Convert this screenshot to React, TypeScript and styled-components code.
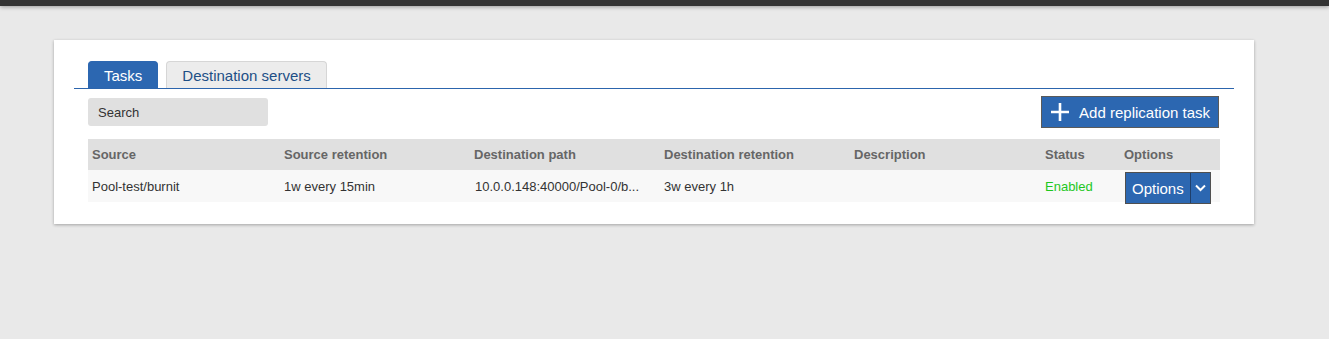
import React from "react";
import styled, { createGlobalStyle } from "styled-components";

const GlobalStyle = createGlobalStyle`
    html, body {
        margin: 0;
        padding: 0;
        background: #e9e9e9;
        font-family: "Liberation Sans", Arial, sans-serif;
    }
`;

const StyledPage = styled.div`
    min-height: 339px;
    display: flex;
    flex-direction: column;
`;

const TopBar = styled.div`
    height: 6px;
    background: #333333;
    box-shadow: 0 1px 4px rgba(0, 0, 0, 0.35);
`;

const Card = styled.div`
    margin: 34px 0 0 54px;
    width: 1200px;
    box-sizing: border-box;
    background: #ffffff;
    box-shadow: 0 1px 3px rgba(0, 0, 0, 0.3);
    padding: 21px 20px 22px 20px;
`;

const TabBar = styled.div`
    display: flex;
    gap: 8px;
    padding-left: 14px;
    border-bottom: 1px solid #2c65ad;
`;

const Tab = styled.div<{ $active?: boolean }>`
    height: 27px;
    box-sizing: border-box;
    padding: 0 15px;
    display: flex;
    align-items: center;
    font-size: 15px;
    border-radius: 4px 4px 0 0;
    background: ${(p) => (p.$active ? "#2c67b1" : "#ececec")};
    color: ${(p) => (p.$active ? "#ffffff" : "#1d4f86")};
    border: 1px solid ${(p) => (p.$active ? "#2c67b1" : "#d6d6d6")};
    border-bottom: none;
`;

const Body = styled.div`
    padding: 0 14px;
`;

const Toolbar = styled.div`
    display: flex;
    justify-content: space-between;
    align-items: flex-start;
    margin-top: 9px;
`;

const Search = styled.input`
    width: 180px;
    height: 28px;
    box-sizing: border-box;
    border: none;
    border-radius: 3px;
    background: #e0e0e0;
    padding: 0 10px;
    font-family: inherit;
    font-size: 13px;
    color: #333;
    outline: none;
    &::placeholder {
        color: #333;
    }
`;

const PrimaryButton = styled.button`
    height: 32px;
    margin-top: -2px;
    margin-right: 1px;
    box-sizing: border-box;
    display: flex;
    align-items: center;
    gap: 9px;
    padding: 0 8px 0 8px;
    background: #2c67b1;
    color: #ffffff;
    border: 1px solid #5a5a5a;
    font-family: inherit;
    font-size: 15px;
    cursor: pointer;
`;

const Table = styled.div`
    margin-top: 11px;
    display: grid;
    grid-template-columns: 192px 190px 190px 190px 191px 79px 1fr;
`;

const HeadCell = styled.div`
    height: 31px;
    display: flex;
    align-items: center;
    padding-left: 4px;
    background: #e0e0e0;
    color: #666666;
    font-size: 13px;
    font-weight: bold;
`;

const Cell = styled.div<{ $color?: string; $indent?: number }>`
    height: 32px;
    display: flex;
    align-items: center;
    padding-left: ${(p) => p.$indent ?? 4}px;
    background: #f8f8f8;
    color: ${(p) => p.$color || "#333333"};
    font-size: 13px;
    white-space: nowrap;
`;

const SplitButton = styled.div`
    display: flex;
    height: 32px;
    margin-top: 2px;
    margin-left: 1px;
    box-sizing: border-box;
    border: 1px solid #4f4f4f;
    background: #2c67b1;
    color: #ffffff;
    font-size: 15px;
    align-self: flex-start;
`;

const SplitMain = styled.span`
    display: flex;
    align-items: center;
    padding: 0 6px;
    border-right: 1px solid #1f3f6a;
`;

const SplitCaret = styled.span`
    display: flex;
    align-items: center;
    justify-content: center;
    width: 19px;
`;

const PlusIcon = () => (
    <svg width="20" height="20" viewBox="0 0 20 20">
        <path d="M10 1v18M1 10h18" stroke="#fff" strokeWidth="2.6" />
    </svg>
);

const CaretIcon = () => (
    <svg width="11" height="8" viewBox="0 0 11 8">
        <path d="M1 1.5l4.5 4.5 4.5-4.5" stroke="#fff" strokeWidth="2" fill="none" />
    </svg>
);

const columns = [
    "Source",
    "Source retention",
    "Destination path",
    "Destination retention",
    "Description",
    "Status",
    "Options",
];

const App = () => {
    return (
        <StyledPage>
            <GlobalStyle />
            <TopBar />
            <Card>
                <TabBar>
                    <Tab $active>Tasks</Tab>
                    <Tab>Destination servers</Tab>
                </TabBar>
                <Body>
                    <Toolbar>
                        <Search placeholder="Search" />
                        <PrimaryButton>
                            <PlusIcon />
                            Add replication task
                        </PrimaryButton>
                    </Toolbar>
                    <Table>
                        {columns.map((c) => (
                            <HeadCell key={c}>{c}</HeadCell>
                        ))}
                        <Cell>Pool-test/burnit</Cell>
                        <Cell>1w every 15min</Cell>
                        <Cell $indent={5}>10.0.0.148:40000/Pool-0/b...</Cell>
                        <Cell>3w every 1h</Cell>
                        <Cell />
                        <Cell $color="#1ec71e">Enabled</Cell>
                        <Cell>
                            <SplitButton>
                                <SplitMain>Options</SplitMain>
                                <SplitCaret>
                                    <CaretIcon />
                                </SplitCaret>
                            </SplitButton>
                        </Cell>
                    </Table>
                </Body>
            </Card>
        </StyledPage>
    );
};

export default App;
